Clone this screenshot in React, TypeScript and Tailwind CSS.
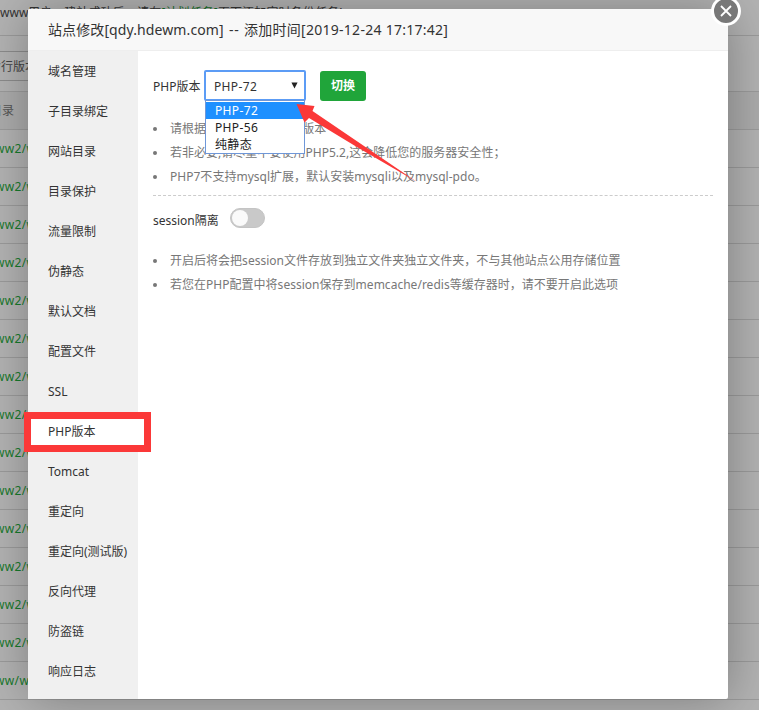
import { useState } from "react";

const menuItems = [
  "域名管理",
  "子目录绑定",
  "网站目录",
  "目录保护",
  "流量限制",
  "伪静态",
  "默认文档",
  "配置文件",
  "SSL",
  "PHP版本",
  "Tomcat",
  "重定向",
  "重定向(测试版)",
  "反向代理",
  "防盗链",
  "响应日志",
];

const versions = ["PHP-72", "PHP-56", "纯静态"];

const versionTips = [
  "请根据您的程序需求选择版本",
  "若非必要,请尽量不要使用PHP5.2,这会降低您的服务器安全性；",
  "PHP7不支持mysql扩展，默认安装mysqli以及mysql-pdo。",
];

const sessionTips = [
  "开启后将会把session文件存放到独立文件夹独立文件夹，不与其他站点公用存储位置",
  "若您在PHP配置中将session保存到memcache/redis等缓存器时，请不要开启此选项",
];

const sitePaths = [...Array<string>(14).fill("ww2/w"), "ww/ww"];

function SitePage(): JSX.Element {
  return (
    <div className="flex h-[710px] flex-col overflow-hidden bg-[#b3b3b3] text-[#333]">
      <div className="h-9 shrink-0 whitespace-nowrap border-b border-[#9b9b9b] pt-[5px] leading-4 tracking-[0.12px]">
        <span className="inline-block w-7">www</span>用户，建站成功后，请在
        <span className="text-[#167029]">[计划任务]</span>页面添加定时备份任务!
      </div>
      <div className="h-[55px] shrink-0 pt-[15px]">
        <div className="-ml-[12px] h-[30px] w-20 whitespace-nowrap border border-[#8c8c8c] leading-[30px] text-[#444]">命行版本</div>
      </div>
      <div className="h-[39px] shrink-0 border-y border-[#9b9b9b] bg-[#acacac] leading-[37px] text-[#555]">
        <span className="-ml-[10px]">目录</span>
      </div>
      {sitePaths.map((path, i) => (
        <div key={i} className="h-[38px] shrink-0 border-b border-[#9b9b9b] leading-[38px] text-[#177a2c]">
          <span className="-ml-[5px] tracking-[0.35px]">{path}</span>
        </div>
      ))}
    </div>
  );
}

function Tips({ items }: { items: string[] }): JSX.Element {
  return (
    <ul className="text-[#777]">
      {items.map((item) => (
        <li key={item} className="flex h-6 items-center whitespace-nowrap tracking-[0.02px]">
          <span className="mr-[13px] h-1 w-1 rounded-full bg-[#777]" />
          {item}
        </li>
      ))}
    </ul>
  );
}

function VersionSelect({ value, onChange }: { value: string; onChange: (v: string) => void }): JSX.Element {
  return (
    <div className="relative ml-[3px] h-[31px] w-[102px]">
      <div className="flex h-full items-center justify-between rounded-[2px] border-2 border-[#5c9cf5] bg-white pl-[8px] pr-[6px]">
        <span className="pt-0.5 tracking-[0.35px]">{value}</span>
        <svg width="7" height="7" viewBox="0 0 8 8">
          <path d="M0.5 0.5h7L4 7.5z" fill="#222" />
        </svg>
      </div>
      <ul className="absolute left-px top-[30px] z-10 h-[54px] w-[100px] border border-[#6f97d8] bg-white pt-px text-[#222]">
        {versions.map((v) => (
          <li
            key={v}
            onClick={() => onChange(v)}
            className={`h-[17px] pl-[9px] leading-[17px] tracking-[0.35px] ${v === value ? "bg-[#1e90ff] text-white" : ""}`}
          >
            {v}
          </li>
        ))}
      </ul>
    </div>
  );
}

export default function App(): JSX.Element {
  const [active, setActive] = useState("PHP版本");
  const [version, setVersion] = useState("PHP-72");
  const [isolated, setIsolated] = useState(false);

  return (
    <div className="relative h-[710px] w-[759px] overflow-hidden font-['Noto_Sans','Noto_Sans_CJK_SC',sans-serif] text-[12px]">
      <SitePage />

      <div className="absolute left-7 top-[9px] flex h-[690px] w-[700px] flex-col rounded-[2px] bg-white shadow-[1px_1px_50px_rgba(0,0,0,0.3)]">
        <header className="flex h-[42px] shrink-0 whitespace-pre rounded-t-[2px] border-b border-[#eee] bg-[#f8f8f8] pl-5 text-[14px] leading-[41px] text-[#333]">
          <span className="w-[181px] tracking-[0.1px]">站点修改[qdy.hdewm.com]</span>
          <span className="w-[15px] tracking-[0.8px]">--</span>
          <span className="tracking-[0.27px]">添加时间[2019-12-24 17:17:42]</span>
        </header>

        <div className="flex min-h-0 flex-1 text-[#333]">
          <nav className="w-[110px] bg-[#f0f0f0] pt-px">
            {menuItems.map((item) => (
              <p
                key={item}
                onClick={() => setActive(item)}
                className={`h-10 whitespace-nowrap pl-5 leading-10 ${item === active ? "bg-white" : ""}`}
              >
                {item}
              </p>
            ))}
          </nav>

          <main className="flex-1 pl-[15px] pr-[15px] pt-[19px]">
            <div className="flex items-center">
              <span className="w-[48px] whitespace-nowrap pt-0.5">PHP版本</span>
              <VersionSelect value={version} onChange={setVersion} />
              <button className="ml-[14px] h-[30px] w-[46px] rounded-[3px] bg-[#20a53a] pt-px font-bold text-white">切换</button>
            </div>

            <div className="mt-4 border-b border-dashed border-[#ccc] pb-[6px]">
              <Tips items={versionTips} />
            </div>

            <div className="mt-[10px] flex h-6 items-center">
              <span className="w-[77px] whitespace-nowrap pt-1.5">session隔离</span>
              <button
                onClick={() => setIsolated((v) => !v)}
                className={`flex h-5 w-[35px] items-center rounded-full border ${
                  isolated ? "justify-end border-[#20a53a] bg-[#20a53a]" : "border-[#c4c4c4] bg-[#c9c9c9]"
                }`}
              >
                <span className="ml-px h-4 w-4 rounded-full bg-[#fafafa]" />
              </button>
            </div>

            <div className="mt-[19px]">
              <Tips items={sessionTips} />
            </div>
          </main>
        </div>

        <button className="absolute -right-[13px] -top-[13px] flex h-[30px] w-[30px] items-center justify-center rounded-full border-[3px] border-white bg-[#787878]">
          <svg width="12" height="12" viewBox="0 0 12 12" stroke="#fff" strokeWidth="1.8">
            <path d="M1 1l10 10M11 1L1 11" />
          </svg>
        </button>
      </div>

      {/* marker frame and arrow */}
      <div className="pointer-events-none absolute left-6 top-[412px] h-10 w-[127px] border-[7px] border-[#fb3838]" />
      <svg className="pointer-events-none absolute left-[296px] top-[103px] z-20" width="125" height="82" viewBox="0 0 125 82">
        <path d="M0.5 1L18.5 3L16.5 8L121 79L60 43.5L13 15L8.5 19.5Z" fill="#fb3838" />
      </svg>
    </div>
  );
}
